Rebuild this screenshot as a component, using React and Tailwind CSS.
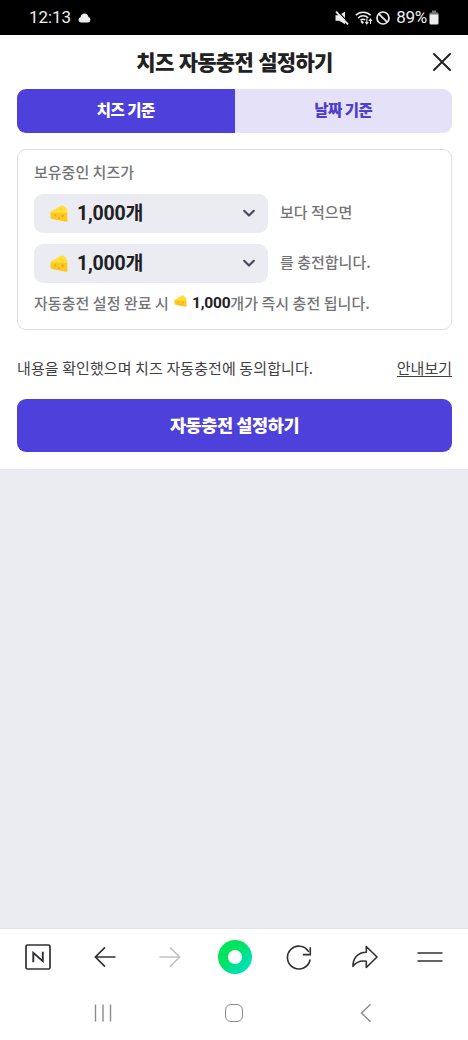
import React from "react";

const kr = "font-[Roboto,'Noto_Sans_CJK_KR',sans-serif]";
const krOnly = "font-['Noto_Sans_CJK_KR',sans-serif]";

function Cheese({ className }) {
  return (
    <svg viewBox="0 0 18 17" className={className} aria-hidden="true">
      <path d="M.6 6.800 11 .7c.5-.3 1.100-.3 1.700-.1 2.400 1 4 2.800 4.600 5.400L17.300 9 .7 11Z" fill="#ffdf3a" />
      <path d="M.6 7.500 17.300 8l.1 7.400c0 1.100-.6 1.500-1.600 1.300L2 13.900c-.8-.2-1.400-.7-1.400-1.500Z" fill="#fdc822" />
      <circle cx="5.200" cy="10.300" r="1" fill="#eda616" />
      <circle cx="12.700" cy="10.700" r="1.200" fill="#eda616" />
      <circle cx="8.900" cy="13" r=".9" fill="#eda616" />
      <ellipse cx="11" cy="4.300" rx="1.500" ry=".8" fill="#f9cf28" />
    </svg>
  );
}

function Select() {
  return (
    <button className="flex h-[39px] w-[234px] items-center rounded-[9px] bg-[#ebecf2] pr-3 pb-px pl-4">
      <Cheese className="h-[17px] w-[18px]" />
      <span className={`${kr} ml-[9px] pt-[2px] text-[19.500px] leading-none font-bold tracking-[-0.2px] text-[#202124]`}>1,000개</span>
      <svg viewBox="0 0 14 14" className="ml-auto size-[14px]" fill="none" stroke="#4b4860" strokeWidth="2.200" strokeLinecap="round" strokeLinejoin="round">
        <path d="m2.200 4.800 4.800 4.700 4.800-4.700" />
      </svg>
    </button>
  );
}

function StatusBar() {
  return (
    <header className="flex h-[35px] items-center bg-black pr-[29px] pl-[29px] text-[#eee]">
      <span className="font-[Roboto,sans-serif] text-[17px] leading-none tracking-[-0.1px]">12:13</span>
      <svg viewBox="0 0 13 10" className="ml-[7px] h-[10px] w-[13px]" fill="#eee">
        <path d="M3 9.500a2.700 2.700 0 0 1-.5-5.300C3 1.800 4.600.5 6.600.5s3.500 1.300 3.900 3.400A2.900 2.900 0 0 1 10 9.500Z" />
      </svg>
      <svg viewBox="0 0 14 14" className="ml-auto size-[14px]">
        <path d="M.5 4.300h3.500L10 .7v12.600L4.300 9.700H.5Z" fill="#eee" />
        <path d="m2.500 0 11.500 12.200" stroke="#000" strokeWidth="1.200" />
        <path d="m1 .6 12 12.800" stroke="#eee" strokeWidth="1.700" />
      </svg>
      <svg viewBox="0 0 18 15" className="ml-[6px] h-[15px] w-[18px]" fill="none" stroke="#eee" strokeWidth="1.500">
        <path d="M.8 5.200a10.500 10.500 0 0 1 14.800 0M3.200 7.900a7 7 0 0 1 10 0M5.500 10.400a3.800 3.800 0 0 1 4.700-.5" />
        <path d="m6.200 11.300 2 2" strokeWidth="2" />
        <path d="M11.800 8.500v5M10.300 12l1.500 1.800 1.500-1.800M15.500 14V9M14 10.800 15.500 9l1.500 1.800" strokeWidth="1.100" />
      </svg>
      <svg viewBox="0 0 14 14" className="ml-[3px] size-[14px]" fill="none" stroke="#eee" strokeWidth="1.700">
        <circle cx="7" cy="7" r="6" />
        <path d="m2.800 2.800 8.400 8.400" />
      </svg>
      <span className="ml-[6px] font-[Roboto,sans-serif] text-[17px] leading-none tracking-[-0.300px]">89%</span>
      <svg viewBox="0 0 10 15" className="ml-[2px] h-[15px] w-[10px]">
        <path d="M3 .5h4v2h1.500q1 0 1 1V5H.5V3.500q0-1 1-1H3Z" fill="#777" />
        <path d="M.5 4.500h9V13q0 1.500-1.500 1.500H2Q.5 14.500.5 13Z" fill="#eee" />
      </svg>
    </header>
  );
}

function BrowserBar() {
  return (
    <nav className="grid h-[56px] grid-cols-7 items-center justify-items-center px-[5px]">
      <svg viewBox="0 0 26 26" className="size-[26px]" fill="none" stroke="#303033" strokeWidth="1.700">
        <rect x="1" y="1" width="24" height="24" rx="1.500" />
        <path d="M8.300 18.300V8.800l9.500 8.400V7.700" strokeWidth="1.900" />
      </svg>
      <svg viewBox="0 0 22 22" className="ml-[3px] size-[22px]" fill="none" stroke="#303033" strokeWidth="1.700">
        <path d="M21.500 11H1.500M11 1.300 1.400 11l9.600 9.700" />
      </svg>
      <svg viewBox="0 0 22 22" className="ml-[2px] size-[22px]" fill="none" stroke="#c4c4c7" strokeWidth="1.700">
        <path d="M.5 11h20M11 1.300l9.600 9.700-9.600 9.700" />
      </svg>
      <div className="ml-[2px] flex size-[34px] items-center justify-center rounded-full bg-linear-to-br from-[#03e35d] from-40% to-[#06dcd5]">
        <div className="size-[14px] rounded-full bg-white" />
      </div>
      <svg viewBox="0 0 26 26" className="size-[26px]" fill="none" stroke="#303033" strokeWidth="1.600">
        <path d="M24.100 15.500A11.400 11.400 0 1 1 22.700 7.800M24.300 3.300v7.300h-7.500" />
      </svg>
      <svg viewBox="0 0 26 24" className="h-[24px] w-[26px]" fill="none" stroke="#303033" strokeWidth="1.600" strokeLinejoin="round">
        <path d="M14.300 1.500 25 12 14.300 22.500v-6.200C8.500 15.400 4 17.300 1 21.300.8 13.500 5.800 7.200 14.300 7.200Z" />
      </svg>
      <svg viewBox="0 0 26 12" className="h-[12px] w-[26px]" stroke="#303033" strokeWidth="1.700">
        <path d="M.5 2h25M.5 10h25" />
      </svg>
    </nav>
  );
}

export default function App() {
  return (
    <div className={`${krOnly} flex h-[1040px] w-[468px] flex-col overflow-hidden bg-[#ebecf2]`}>
      <StatusBar />
      <main className="h-[434px] bg-white pr-[16px] pl-[17px]">
        <div className="grid h-[54px] grid-cols-[24px_1fr_24px] items-center">
          <h1 className="col-start-2 pb-[2px] text-center text-[21px] leading-none font-black tracking-[-0.700px] [word-spacing:1px] whitespace-nowrap text-[#222]">치즈 자동충전 설정하기</h1>
          <svg viewBox="0 0 20 20" className="ml-[4px] size-[20px]" fill="none" stroke="#222" strokeWidth="2" strokeLinecap="round">
            <path d="m2 2 16 16M18 2 2 18" />
          </svg>
        </div>
        <div className="flex h-[44px] overflow-hidden rounded-[9px] text-[15.500px] leading-none font-black tracking-[-0.500px]">
          <button className="flex-1 bg-[#4e40db] pb-[2px] text-white">치즈 기준</button>
          <button className="flex-1 bg-[#e5e1f9] pb-[2px] text-[#4e40c8]">날짜 기준</button>
        </div>
        <section className="mt-[16px] h-[181px] rounded-[9px] border border-[#dfdfe3] px-4 text-[15px] font-medium text-[#747477]">
          <p className="flex h-[44px] items-center pb-[2px] leading-none">보유중인 치즈가</p>
          <div className="flex items-center gap-3 leading-none">
            <Select />
            <span className="pb-[4px]">보다 적으면</span>
          </div>
          <div className="mt-[11px] flex items-center gap-3 leading-none">
            <Select />
            <span className="pb-[4px]">를 충전합니다.</span>
          </div>
          <p className="mt-[8px] flex h-[22px] items-center leading-none tracking-[0.050px] whitespace-nowrap">
            자동충전 설정 완료 시
            <Cheese className="mr-[5px] ml-[5px] h-[12px] w-[13px] -translate-y-px" />
            <strong className="pt-[3px] font-[Roboto,sans-serif] text-[15.500px] leading-none font-bold tracking-[-0.200px] text-[#202124]">1,000</strong>개가 즉시 충전 됩니다.
          </p>
        </section>
        <div className="mt-[24px] flex h-[26px] items-center justify-between text-[15px] leading-none text-[#404043]">
          <span className="tracking-[0.100px]">내용을 확인했으며 치즈 자동충전에 동의합니다.</span>
          <a className="border-b border-[#404043] pt-px leading-[17px]">안내보기</a>
        </div>
        <button className="mt-[19px] h-[53px] w-full rounded-[9px] bg-[#4e40db] pb-[1px] text-[17.500px] leading-none font-black tracking-[-0.400px] text-white">자동충전 설정하기</button>
      </main>
      <footer className="mt-auto h-[112px] border-t border-[#e4e4ea] bg-white">
        <BrowserBar />
        <nav className="grid h-[55px] grid-cols-3 items-center justify-items-center px-[37px]">
          <svg viewBox="0 0 18 18" className="size-[18px]" stroke="#8b8b8e" strokeWidth="1.400">
            <path d="M1.500.5v17M9 .5v17M16.500.5v17" />
          </svg>
          <div className="size-[18px] rounded-[6px] border-[1.5px] border-[#8b8b8e]" />
          <svg viewBox="0 0 12 20" className="ml-[1px] h-[20px] w-[12px]" fill="none" stroke="#8b8b8e" strokeWidth="1.400">
            <path d="m10.500 1.300-9 8.700 9 8.700" />
          </svg>
        </nav>
      </footer>
    </div>
  );
}
